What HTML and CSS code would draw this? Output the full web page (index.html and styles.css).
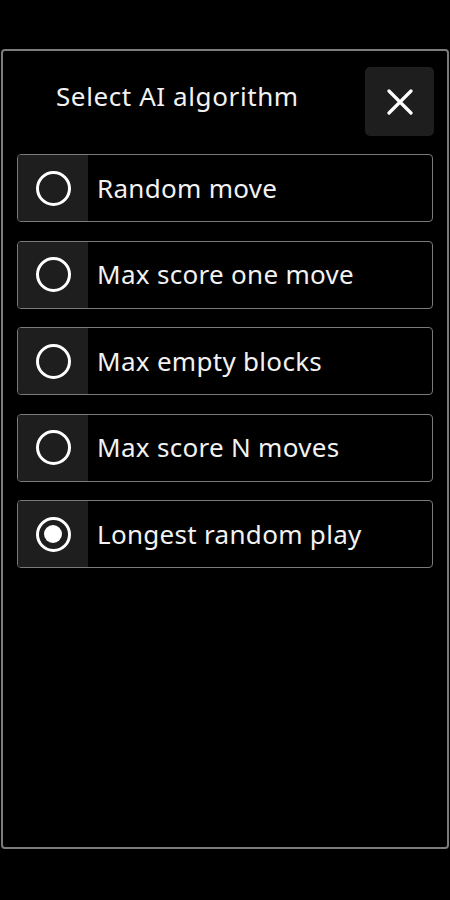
FILE: index.html
```html
<!DOCTYPE html>
<html>
<head>
<meta charset="utf-8">
<link rel="stylesheet" href="styles.css">
</head>
<body>
<div class="panel">
  <div class="header">
    <div class="title">Select AI algorithm</div>
    <button class="close" aria-label="Close">
      <svg width="26" height="26" viewBox="0 0 26 26"><path d="M2 2 L24 24 M24 2 L2 24" stroke="#fff" stroke-width="3.2" stroke-linecap="round"/></svg>
    </button>
  </div>
  <div class="list">
    <div class="item"><div class="radio-box"><span class="radio"></span></div><span class="label">Random move</span></div>
    <div class="item"><div class="radio-box"><span class="radio"></span></div><span class="label">Max score one move</span></div>
    <div class="item"><div class="radio-box"><span class="radio"></span></div><span class="label">Max empty blocks</span></div>
    <div class="item"><div class="radio-box"><span class="radio"></span></div><span class="label">Max score N moves</span></div>
    <div class="item"><div class="radio-box"><span class="radio checked"></span></div><span class="label">Longest random play</span></div>
  </div>
</div>
</body>
</html>
```
FILE: styles.css
```css
html, body {
  margin: 0;
  padding: 0;
  background: #000;
}
body {
  font-family: "Noto Sans", "Open Sans", sans-serif;
  color: #f2f2f2;
}
.panel {
  box-sizing: border-box;
  margin: 49px 1px 0 1px;
  height: 800px;
  border: 2px solid #7c7c7c;
  border-radius: 4px;
  padding: 16px 14px 0 14px;
}
.header {
  display: flex;
  align-items: center;
  justify-content: space-between;
  height: 69px;
  margin-bottom: 18px;
}
.title {
  font-size: 26px;
  padding-left: 39px;
  margin-top: -11px;
  letter-spacing: 0.6px;
}
.close {
  width: 69px;
  height: 69px;
  margin-right: -1px;
  border: none;
  border-radius: 5px;
  background: #1e1e1e;
  display: flex;
  align-items: center;
  justify-content: center;
  padding: 0;
}
.list {
  display: flex;
  flex-direction: column;
  gap: 18.5px;
}
.item {
  box-sizing: border-box;
  height: 68px;
  border: 1.5px solid #7a7a7a;
  border-radius: 4px;
  display: flex;
  align-items: center;
  overflow: hidden;
}
.radio-box {
  width: 70px;
  align-self: stretch;
  background: #1e1e1e;
  display: flex;
  align-items: center;
  justify-content: center;
}
.radio {
  box-sizing: border-box;
  width: 35px;
  height: 35px;
  border: 3.5px solid #fff;
  border-radius: 50%;
  display: flex;
  align-items: center;
  justify-content: center;
}
.radio.checked::after {
  content: "";
  width: 18px;
  height: 18px;
  border-radius: 50%;
  background: #fff;
}
.label {
  font-size: 26px;
  padding-left: 9px;
  margin-top: -1px;
  letter-spacing: 0.3px;
}
```
